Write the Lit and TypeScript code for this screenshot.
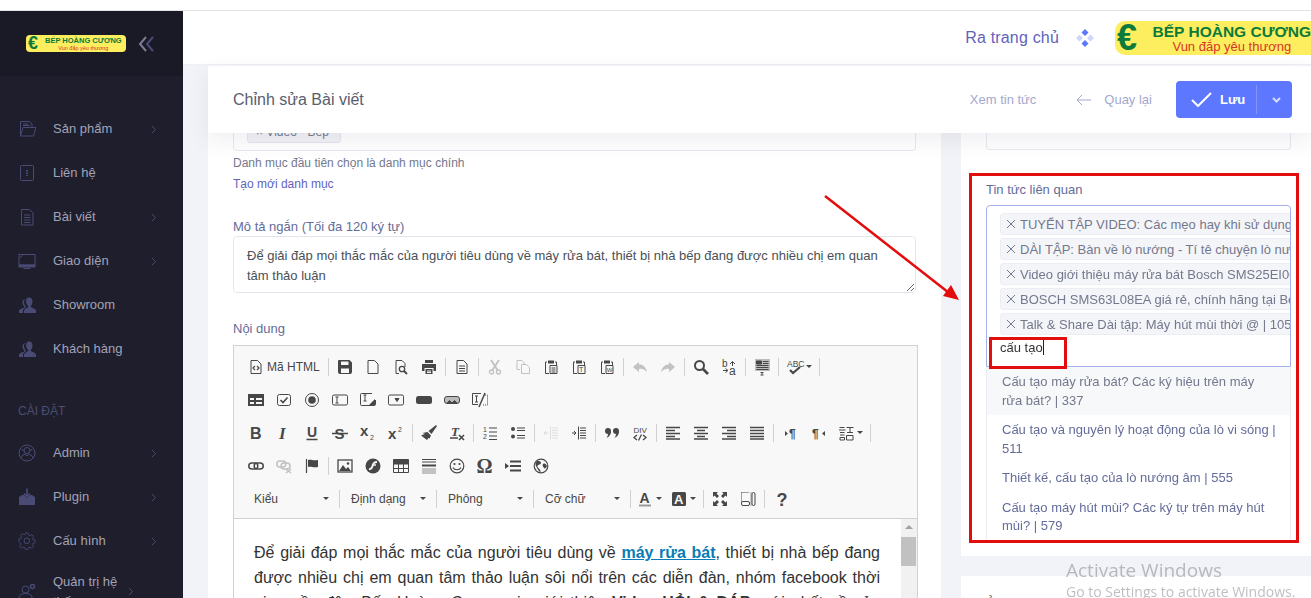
import { LitElement, html, css, svg } from 'lit';
import { customElement } from 'lit/decorators.js';

// toolbar icons, all on a 16x16 box
const t = (x: number, y: number, s: number, c: string, extra = '') =>
  svg`<text x=${x} y=${y} font-size=${s} font-family="Liberation Sans, sans-serif" font-weight=${extra || 'bold'} fill="currentColor" stroke="none">${c}</text>`;

const clip = svg`<path d="M4 3H2.500v11.500H6M12 3h1.500v3" fill="none" stroke="currentColor"/><path d="M5 1.500h6v3H5z" fill="currentColor"/>`;

const ICONS: Record<string, unknown> = {
  source: svg`<path d="M3 1.500h6.500l3.500 3.500v9.500H3z" fill="none" stroke="currentColor"/><path d="M7 7 5 9l2 2M9 7l2 2-2 2" fill="none" stroke="currentColor" stroke-width="1.200"/>`,
  save: svg`<path fill-rule="evenodd" d="M2 1h10.500L15 3.500V13a2 2 0 0 1-2 2H3a2 2 0 0 1-2-2V2a1 1 0 0 1 1-1zM4 2.500v3.500h7.500V2.500zM4 9.500V14h8V9.500z" fill="currentColor"/>`,
  newpage: svg`<path d="M3 1.500h6.500l3.500 3.500v9.500H3z" fill="none" stroke="currentColor"/>`,
  preview: svg`<path d="M6 14.500H3v-13h6l3 3V8" fill="none" stroke="currentColor"/><circle cx="9" cy="10" r="2.700" fill="none" stroke="currentColor" stroke-width="1.300"/><path d="m11 12 3 3" stroke="currentColor" stroke-width="1.800"/>`,
  print: svg`<path d="M4 1h8v3H4zM1 5h14v7h-2.500V9h-9v3H1zM4.500 10h7v5h-7z" fill="currentColor"/><path d="M6 12h4M6 13.500h4" stroke="#f8f8f8"/>`,
  templates: svg`<path d="M3 1.500h6.500l3.500 3.500v9.500H3z M5 7h6M5 9.500h6M5 12h6" fill="none" stroke="currentColor"/>`,
  cut: svg`<path d="m4 1 6.500 10M12 1 5.500 11" stroke="currentColor" stroke-width="1.800" fill="none"/><circle cx="4.500" cy="13" r="2" fill="none" stroke="currentColor" stroke-width="1.300"/><circle cx="11.500" cy="13" r="2" fill="none" stroke="currentColor" stroke-width="1.300"/>`,
  copy: svg`<path d="M5 10.500H2v-9h5l2 2V5M6.500 5.500h5l3 3v6h-8z" fill="none" stroke="currentColor"/>`,
  paste: svg`${clip}<path d="M7 6.500h7v8H7zM8.500 9h4M8.500 11h4M8.500 13h4" fill="none" stroke="currentColor"/>`,
  pastetext: svg`${clip}<path d="M7 6.500h7v8H7z" fill="none" stroke="currentColor"/>${t(8, 13, 7, 'T', 'normal')}`,
  pasteword: svg`${clip}<path d="M7 6.500h7v8H7z" fill="none" stroke="currentColor"/>${t(7.700, 13, 6, 'W', 'normal')}`,
  undo: svg`<path d="M7 3 1 8l6 5v-3c3-.5 5 0 8 3-1-5-4-7.500-8-7.500z" fill="currentColor"/>`,
  redo: svg`<path d="m9 3 6 5-6 5v-3c-3-.5-5 0-8 3 1-5 4-7.500 8-7.500z" fill="currentColor"/>`,
  find: svg`<circle cx="6.500" cy="6.500" r="4.500" fill="none" stroke="currentColor" stroke-width="2"/><path d="m10 10 5 5" stroke="currentColor" stroke-width="2.600"/>`,
  replace: svg`${t(1, 8, 10, 'b', 'normal')}${t(8, 16, 12, 'a', 'normal')}<path d="M9 5 11.500 2.500 14 5M11.500 3v4M2 11.500h4M4.500 9.500 7 11.500l-2.500 2" fill="none" stroke="currentColor"/>`,
  selectall: svg`<path d="M1 0h15v12H1z" fill="#bdbdbd"/><path d="M2.500 2h5v3h-5zM9 2.500h5.500M9 4.500h5.500M2.500 6.500h12M2.500 8.500h12M2.500 10.500h12" fill="currentColor" stroke="currentColor"/><path d="M6.500 13.500h3M8 13v3M6.500 16h3" stroke="currentColor" fill="none"/>`,
  spell: svg`${t(0, 7.500, 8.500, 'ABC', 'normal')}<path d="m3 11 3 3 7-6" fill="none" stroke="currentColor" stroke-width="2.200"/>`,
  form: svg`<path fill-rule="evenodd" d="M0 2h16v12H0zM2 6v2h4V6zm6 0v2h6V6zm-6 4v2h4v-2zm6 0v2h6v-2z" fill="currentColor"/>`,
  checkbox: svg`<rect x="1.500" y="2.500" width="13" height="11" rx="2" fill="none" stroke="currentColor"/><path d="m4.500 8 2.500 2.500 4.500-5" fill="none" stroke="currentColor" stroke-width="1.600"/>`,
  radio: svg`<circle cx="8" cy="8" r="6.500" fill="none" stroke="currentColor"/><circle cx="8" cy="8" r="3.800" fill="currentColor"/>`,
  textfield: svg`<rect x="0.500" y="3" width="15" height="10" rx="1.500" fill="none" stroke="currentColor"/><path d="M3.500 5h3M5 5v6M3.500 11h3" fill="none" stroke="currentColor"/>`,
  textarea: svg`<path d="M15.500 8v4.500a1 1 0 0 1-1 1h-13a1 1 0 0 1-1-1v-10a1 1 0 0 1 1-1H12" fill="none" stroke="currentColor"/><path d="M3.500 3h3M5 3v6M3.500 9h3" fill="none" stroke="currentColor"/><path d="m9 13 6-6v6z" fill="currentColor"/>`,
  select: svg`<rect x="0.500" y="3" width="15" height="10" rx="1.500" fill="none" stroke="currentColor"/><path d="m7 6.500 4 0-2 3z" fill="currentColor" stroke="currentColor"/>`,
  button: svg`<rect x="0" y="4" width="16" height="8" rx="2.500" fill="currentColor"/>`,
  imagebutton: svg`<rect x="0.500" y="4.500" width="15" height="7" rx="2.500" fill="#bbb" stroke="currentColor"/><path d="m3 11 2.500-2.500L8 11M8 11l2.500-2.500L13 11" fill="currentColor" stroke="currentColor"/>`,
  hidden: svg`<path d="M9 1.500H.5v11H6" fill="none" stroke="currentColor"/><path d="M3 4h3M4.500 4v6M3 10h3" fill="none" stroke="currentColor"/><path d="m7 15 6-14" stroke="currentColor" stroke-width="1.500"/><path d="M13 3h2.500v10H11" fill="none" stroke="currentColor" stroke-dasharray="1 1"/>`,
  bold: t(2, 14, 16, 'B'),
  italic: svg`<text x="3" y="14" font-size="17" font-family="Liberation Serif, serif" font-style="italic" font-weight="bold" fill="currentColor">I</text>`,
  underline: svg`${t(3, 12, 14, 'U')}<path d="M2.500 14.500h11" stroke="currentColor" stroke-width="1.500"/>`,
  strike: svg`${t(2.500, 14, 15, 'S')}<path d="M0 8.500h16" stroke="currentColor" stroke-width="1.500"/>`,
  sub: svg`${t(0, 11, 15, 'x')}${t(10, 15, 7, '2', 'normal')}`,
  sup: svg`${t(0, 14, 15, 'x')}${t(10, 7, 7, '2', 'normal')}`,
  brush: svg`<path d="M15 0 16 1 10.500 9 7.500 6zM6.500 7l3.500 3.500-1.500 3-1-.5-1.500 2L0 10.500 2.500 9.500 4 9 1.500 8z" fill="currentColor"/>`,
  removeformat: svg`<text x="2" y="11" font-size="13" font-family="Liberation Serif, serif" font-style="italic" font-weight="bold" fill="currentColor">T</text><path d="M1 13h8" stroke="currentColor" stroke-width="1.500"/><path d="m10 10 5 5M15 10l-5 5" stroke="currentColor" stroke-width="1.600"/>`,
  ol: svg`${t(1, 7, 7, '1', 'normal')}${t(1, 14, 7, '2', 'normal')}<path d="M7 3h8M7 7h8M7 11h8M7 14.500h8" stroke="currentColor"/>`,
  ul: svg`<circle cx="3" cy="4" r="2" fill="currentColor"/><circle cx="3" cy="11.500" r="2" fill="currentColor"/><path d="M7 3h8M7 5.500h8M7 10.500h8M7 13h8" stroke="currentColor"/>`,
  outdent: svg`<path d="M7.500 1.500v13M9 3h6M9 5.500h6M9 8h6M9 10.500h6M9 13h6" stroke="currentColor" opacity=".45"/><path d="M5 8H1M3 6 1 8l2 2" fill="none" stroke="currentColor" opacity=".45"/>`,
  indent: svg`<path d="M7.500 1.500v13M9 3h6M9 5.500h6M9 8h6M9 10.500h6M9 13h6M1 8h4M3 6l2 2-2 2" fill="none" stroke="currentColor"/>`,
  quote: svg`<circle cx="4" cy="6" r="3" fill="currentColor"/><path d="M7 6.500c0 3-2 5.500-4.500 6.500 1-1.500 1.500-3 1.500-4z" fill="currentColor"/><circle cx="12" cy="6" r="3" fill="currentColor"/><path d="M15 6.500c0 3-2 5.500-4.500 6.500 1-1.500 1.500-3 1.500-4z" fill="currentColor"/>`,
  div: svg`${t(1.500, 7.500, 8, 'DIV', 'normal')}<path d="M5 10 2 12.500 5 15M11 10l3 2.500-3 2.500M9.500 9.500l-3 6" fill="none" stroke="currentColor" stroke-width="1.300"/>`,
  left: svg`<path d="M1 2.500h14M1 5.500h9M1 8.500h14M1 11.500h9M1 14h14" stroke="currentColor" stroke-width="1.600"/>`,
  center: svg`<path d="M1 2.500h14M4 5.500h8M1 8.500h14M4 11.500h8M1 14h14" stroke="currentColor" stroke-width="1.600"/>`,
  right: svg`<path d="M1 2.500h14M6 5.500h9M1 8.500h14M6 11.500h9M1 14h14" stroke="currentColor" stroke-width="1.600"/>`,
  justify: svg`<path d="M1 2.500h14M1 5.500h14M1 8.500h14M1 11.500h14M1 14h14" stroke="currentColor" stroke-width="1.600"/>`,
  ltr: svg`<path d="m3 6 3 2.500L3 11z" fill="currentColor"/>${t(7, 13, 12, '¶')}`,
  rtl: svg`<path d="m15 6-3 2.500 3 2.500z" fill="currentColor"/>${t(2, 13, 12, '¶')}`,
  lang: svg`<path d="M1.500 2.500h5M1 5h6.500M2 7.500h4.500M2 10h4.500M2 12.500h4.500v2.500H2zM8.500 2.500h7M12 2.500v5M9 7.500h6M8.500 10.500h6.500v4.500H8.500z" fill="none" stroke="currentColor"/>`,
  link: svg`<rect x="0.800" y="5" width="9" height="6" rx="3" fill="none" stroke="currentColor" stroke-width="1.500"/><rect x="6.200" y="5" width="9" height="6" rx="3" fill="none" stroke="currentColor" stroke-width="1.500"/>`,
  unlink: svg`<rect x="0.800" y="3" width="9" height="6" rx="3" fill="none" stroke="currentColor" stroke-width="1.500"/><rect x="5" y="5" width="9" height="6" rx="3" fill="none" stroke="currentColor" stroke-width="1.500"/><path d="m10 11 5 4M15 11l-5 4" stroke="currentColor" stroke-width="1.500"/>`,
  flag: svg`<path d="M2.500 1v14" stroke="currentColor" stroke-width="1.200"/><path d="M4 2c3-1 5 1 10 0v7c-5 1-7-1-10 0z" fill="currentColor"/>`,
  image: svg`<rect x="1" y="2" width="14" height="12" fill="none" stroke="currentColor" stroke-width="1.300"/><path d="m2 13 4-6 3 4 2-2 3 4z" fill="currentColor"/><circle cx="11" cy="5.500" r="1.300" fill="currentColor"/>`,
  flash: svg`<circle cx="8" cy="8" r="7.500" fill="currentColor"/><path d="M12 4c-3 0-4 1.500-4.500 4S6 11 4 11.500" fill="none" stroke="#f8f8f8" stroke-width="1.800"/><path d="M7 7h4" stroke="#f8f8f8" stroke-width="1.400"/>`,
  table: svg`<path d="M.5 1.500h15v13H.5zM.5 6h15M.5 10.500h15M5.500 6v8.500M10.500 6v8.500" fill="none" stroke="currentColor"/><path d="M.5 1.500h15V6H.5z" fill="currentColor"/>`,
  hr: svg`<path d="M1 1.500h14M1 4h14" stroke="currentColor"/><path d="M1 7.500h14" stroke="currentColor" stroke-width="2"/><path d="M1 11h14M1 13h14M1 15h14" stroke="currentColor" opacity=".6"/>`,
  smile: svg`<circle cx="8" cy="8" r="6.800" fill="none" stroke="currentColor" stroke-width="1.200"/><circle cx="5.500" cy="6" r="1.100" fill="currentColor"/><circle cx="10.500" cy="6" r="1.100" fill="currentColor"/><path d="M4 9.500c1.500 3 6.500 3 8 0" fill="none" stroke="currentColor" stroke-width="1.200"/>`,
  omega: svg`<text x="-0.500" y="15" font-size="20" font-family="Liberation Serif, serif" font-weight="bold" fill="currentColor">Ω</text>`,
  pagebreak: svg`<path d="m0 5 4 3-4 3z" fill="currentColor"/><path d="M5 3.500h11M5 8h11M5 12.500h11" stroke="currentColor" stroke-width="1.800" stroke-dasharray="11 0"/>`,
  globe: svg`<circle cx="8" cy="8" r="6.800" fill="none" stroke="currentColor" stroke-width="1.200"/><path d="M4 3c2 0 4 0 4 2S5 6 4.500 8 7 10 7.500 13 5 12 4 10 2 6 2.500 5zM10 6c2-1 3 0 4 2-1 2-2 3-3 2s-2-3-1-4z" fill="currentColor"/>`,
  color: svg`${t(2.500, 11.500, 14, 'A')}<path d="M2 14.500h12" stroke="#9a9a9a" stroke-width="2"/>`,
  bgcolor: svg`<rect x="1" y="1" width="14" height="14" rx="1.500" fill="currentColor"/><text x="3" y="13" font-size="13" font-weight="bold" font-family="Liberation Sans, sans-serif" fill="#f8f8f8">A</text>`,
  maximize: svg`<path d="M1 1h5L4.500 2.500 7 5 5 7 2.500 4.500 1 6zM15 1v5l-1.500-1.500L11 7 9 5l2.500-2.500L10 1zM1 15v-5l1.500 1.500L5 9l2 2-2.500 2.500L6 15zM15 15h-5l1.500-1.500L9 11l2-2 2.500 2.500L15 10z" fill="currentColor"/>`,
  blocks: svg`<path d="M1.500 1.500h8M1.500 1.500v9M11 1.500v13" fill="none" stroke="currentColor" stroke-dasharray="1 1"/><rect x="1.500" y="10.500" width="8" height="4" rx="1.500" fill="none" stroke="currentColor"/><rect x="12" y="1.500" width="3" height="13" rx="1.500" fill="none" stroke="currentColor"/>`,
  about: t(3.500, 15, 18, '?'),
};

type Tool = string;
// '|' is a separator, '~name' a disabled icon, 'name>' an icon with a dropdown arrow
const ROWS: Tool[][] = [
  ['#source', '|', 'save', 'newpage', 'preview', 'print', '|', 'templates', '|', '~cut', '~copy', 'paste', 'pastetext', 'pasteword', '|', '~undo', '~redo', '|', 'find', 'replace', '|', 'selectall', '|', 'spell>', '|'],
  ['form', 'checkbox', 'radio', 'textfield', 'textarea', 'select', 'button', 'imagebutton', 'hidden'],
  ['bold', 'italic', 'underline', 'strike', 'sub', 'sup', '|', 'brush', 'removeformat', '|', 'ol', 'ul', '|', '~outdent', 'indent', '|', 'quote', 'div', '|', 'left', 'center', 'right', 'justify', '|', 'ltr', 'rtl', 'lang>', '|'],
  ['link', '~unlink', 'flag', '|', 'image', 'flash', 'table', 'hr', 'smile', 'omega', 'pagebreak', 'globe'],
];

const COMBOS = ['Kiểu', 'Định dạng', 'Phông', 'Cỡ chữ'];

const MENU_TOP = [
  ['Sản phẩm', 'box', true],
  ['Liên hệ', 'book', false],
  ['Bài viết', 'doc', true],
  ['Giao diện', 'screen', true],
  ['Showroom', 'users', false],
  ['Khách hàng', 'users', false],
] as const;

const MENU_SETTINGS = [
  ['Admin', 'admin', true],
  ['Plugin', 'plugin', true],
  ['Cấu hình', 'gear', true],
  ['Quản trị hệ thống', 'usergear', true],
] as const;

const NAV_ICONS: Record<string, unknown> = {
  box: svg`<path d="M2.500 16V1.500h9l2.500 2.500v3M2.500 16 5 7.500h13L15.500 16zM5 4h5M5 5.500h7" fill="none" stroke="currentColor"/>`,
  book: svg`<rect x="2.500" y="1.500" width="13" height="15" rx="1" fill="none" stroke="currentColor"/><path d="M9 6v6" stroke="currentColor" stroke-width="2" stroke-dasharray="1.500 1"/>`,
  doc: svg`<path d="M3.500 1.500h8l3.500 3.500v12h-11.500zM6 7h6.500M6 9.500h6.500M6 12h6.500M6 14.500h6.500" fill="none" stroke="currentColor"/>`,
  screen: svg`<rect x="1" y="2.500" width="16" height="10.500" fill="none" stroke="currentColor"/><path d="M1 13h16v2H1zM5.500 16.500h7" fill="currentColor" stroke="currentColor"/><path d="M2 5.500 4.500 3.500" stroke="currentColor"/>`,
  users: svg`<path d="M11 1.500c2.500 0 3.500 2 3.500 4s-1 4-2 5c1 1.500 4.500 1.500 5.500 4V17H6v-2.500c1-2.500 3.500-2.500 4.500-4-1-1-2.500-3-2.500-5 0-2.500 1-4 3-4z" fill="currentColor"/><path d="M7.500 3c-2 0-3 1.500-3 3.500 0 1.500 1 3.500 2 4.500-1 1.500-4.500 1.500-5.500 3.500V17h4v-3c1-1.500 2-2 3-3-1-1.500-2-3-2-5 0-1 .5-2.500 1.500-3z" fill="currentColor"/>`,
  admin: svg`<circle cx="9" cy="9" r="8" fill="none" stroke="currentColor"/><circle cx="9" cy="6.500" r="3" fill="none" stroke="currentColor"/><path d="M3 14c1-3 3-3.500 4-4l2 2 2-2c1 .5 3 1 4 4M3.500 5.500l3 1M14.500 5.500l-3 1" fill="none" stroke="currentColor"/>`,
  plugin: svg`<path d="M1 9l3-2h2l3 3 3-3h2l3 2v8H1z" fill="currentColor"/><path d="M9 0.500V8M6 5.500 9 8.500l3-3" fill="none" stroke="currentColor" stroke-width="1.600"/>`,
  gear: svg`<path d="M7.500 1h3l.5 2.500 1.500.7 2.200-1.300 2 2.200-1.300 2.100.6 1.500 2.500.5-.1 3-2.400.6-.6 1.500 1.300 2.100-2.200 2-2.100-1.300-1.500.6-.6 2.400h-3l-.5-2.400-1.500-.6-2.100 1.300-2.100-2.100 1.300-2.100-.6-1.500L0 11V8l2.500-.6.6-1.500-1.300-2.100 2.100-2 2.100 1.300 1.500-.6z" transform="scale(.88) translate(1 0)" fill="none" stroke="currentColor"/><circle cx="8.800" cy="8.800" r="2.800" fill="none" stroke="currentColor"/>`,
  usergear: svg`<circle cx="7.500" cy="6.500" r="3.500" fill="none" stroke="currentColor"/><path d="M1 17v-2c0-3 3-4.500 6.500-4.500s6 1 6.500 3.500v3z" fill="none" stroke="currentColor"/><circle cx="14.500" cy="3.500" r="2" fill="none" stroke="currentColor" stroke-width="1.500"/>`,
};

const CHIPS = [
  'TUYỂN TẬP VIDEO: Các mẹo hay khi sử dụng',
  'DÀI TẬP: Bàn về lò nướng - Tí tê chuyện lò nướng',
  'Video giới thiệu máy rửa bát Bosch SMS25EI00G',
  'BOSCH SMS63L08EA giá rẻ, chính hãng tại Bếp',
  'Talk & Share Dài tập: Máy hút mùi thời @ | 105',
];

const RESULTS = [
  'Cấu tạo máy rửa bát? Các ký hiệu trên máy rửa bát? | 337',
  'Cấu tạo và nguyên lý hoạt động của lò vi sóng | 511',
  'Thiết kế, cấu tạo của lò nướng âm | 555',
  'Cấu tạo máy hút mùi? Các ký tự trên máy hút mùi? | 579',
];

@customElement('app-root')
export class AppRoot extends LitElement {
  static styles = css`
    :host {
      display: block;
      position: relative;
      width: 1311px;
      height: 598px;
      overflow: hidden;
      background: #f2f3f8;
      font-family: "Liberation Sans", Arial, sans-serif;
      font-size: 13px;
      color: #646c9a;
    }
    .strip { height: 10px; background: #fff; border-bottom: 1px solid #e3e3e6; }
    .shell { display: flex; height: 587px; }

    .side { width: 183px; flex: none; background: #1e1e2d; overflow: hidden; }
    .brand { height: 65px; background: #1a1a27; display: flex; align-items: center; padding-left: 26px; gap: 12px; }
    .collapse { width: 18px; height: 18px; flex: none; }
    .nav { padding-top: 31px; }
    .nav-item { display: flex; align-items: center; min-height: 44px; padding: 0 26px 0 18px; box-sizing: border-box; color: #a2a3b7; line-height: 19.5px; }
    .nav-item.tall { padding-top: 9px; padding-bottom: 9px; }
    .nav-item.tall .nav-label { flex: none; width: 72px; margin-right: 3px; }
    .nav-icon { width: 18px; height: 18px; flex: none; color: #494b74; margin-right: 17px; }
    .nav-label { flex: 1; }
    .nav-arrow { width: 6px; height: 9px; flex: none; color: #494b74; }
    .nav-section { margin: 30px 0 10px 18px; line-height: 20px; font-size: 12px; color: #4c4e6f; }

    .logo { display: flex; align-items: center; background: #fdee5f; overflow: hidden; white-space: nowrap; box-sizing: border-box; }
    .logo-mark { color: #0b7a3b; font-weight: bold; }
    .logo-text { display: flex; flex-direction: column; align-items: center; }
    .logo-name { color: #0b7a3b; font-weight: bold; }
    .logo-tag { color: #d8352a; }
    .logo.small { width: 100px; height: 17px; border-radius: 4px; padding-left: 2px; }
    .small .logo-mark { font-size: 18px; line-height: 17px; width: 17px; }
    .small .logo-name { font-size: 7.500px; line-height: 9px; }
    .small .logo-tag { font-size: 5.500px; line-height: 6px; }
    .logo.large { width: 196px; height: 34px; border-radius: 10px 0 0 10px; padding-left: 2px; flex: none; }
    .large .logo-mark { font-size: 36px; line-height: 34px; width: 36px; }
    .large .logo-name { font-size: 15.500px; line-height: 18px; }
    .large .logo-tag { font-size: 13px; line-height: 12px; }

    .main { flex: 1; min-width: 0; display: flex; flex-direction: column; }
    .topbar { height: 54px; flex: none; box-sizing: border-box; background: #fff; border-bottom: 1px solid #eef0f4; display: flex; align-items: center; justify-content: flex-end; }
    .home { font-size: 16px; letter-spacing: .18px; color: #5f63bd; }
    .diamonds { width: 20px; height: 20px; margin: 0 20px 0 16px; flex: none; }
    .subheader { position: relative; z-index: 2; height: 68px; flex: none; box-sizing: border-box; margin-left: 25px; padding: 0 19px 0 25px; background: #fff; border-top: 1px solid #f1f2f6; box-shadow: 0 8px 22px rgba(82, 63, 105, .09); display: flex; align-items: center; }
    .title { flex: 1; font-size: 16px; color: #595d6e; }
    .sub-link { font-size: 13px; color: #a3a8d0; }
    .back { display: flex; align-items: center; gap: 13px; margin: 0 24px 0 40px; }
    .back svg { width: 15px; height: 12px; }
    .save { width: 116px; height: 37px; border-radius: 4px; background: #5d78ff; color: #fff; display: flex; align-items: center; font-weight: bold; font-size: 13px; }
    .save-main { display: flex; align-items: center; gap: 8px; box-sizing: border-box; padding-left: 15px; width: 81px; height: 29px; border-right: 1px solid #8195ff; }
    .save-main svg { width: 21px; height: 15px; }
    .save-arrow { width: 9px; height: 6px; margin-left: 15px; }

    .content { flex: 1; min-height: 0; margin-left: 25px; display: flex; gap: 20px; overflow: hidden; }
    .card { background: #fff; box-sizing: border-box; }
    .left { width: 733px; flex: none; padding: 0 25px; }
    .right-col { width: 350px; flex: none; display: flex; flex-direction: column; gap: 20px; }
    .right { height: 423px; flex: none; padding: 0 20px 0 25px; }
    .more { flex: 1; min-height: 0; overflow: hidden; padding: 19px 25px 0; color: #595d6e; }

    .field-end { height: 18px; box-sizing: border-box; border: 1px solid #e8e9f0; border-top: 0; border-radius: 0 0 4px 4px; overflow: hidden; padding-left: 13px; }
    .field-chip { width: 94px; height: 22px; margin-top: -12px; background: #f2f3f7; border: 1px solid #e6e7ee; border-radius: 3px; box-sizing: border-box; font-size: 12px; line-height: 20px; padding-left: 8px; color: #74788d; }
    .help { font-size: 12px; height: 18px; line-height: 20px; color: #74788d; margin-top: 2px; }
    .help.link { color: #5f63bd; margin-top: 3px; }
    label { display: block; height: 20px; line-height: 22px; color: #646c9a; }
    textarea { display: block; width: 100%; height: 57px; box-sizing: border-box; margin: 0 0 25px; padding: 9px 13px; border: 1px solid #e2e5ec; border-radius: 4px; font: 13px/19.500px "Liberation Sans", Arial, sans-serif; color: #495057; outline: none; }
    .desc-label { margin-top: 24px; }

    .editor { margin: 7px -2px 0 0; border: 1px solid #d1d1d1; }
    .toolbar { height: 173px; box-sizing: border-box; background: #f8f8f8; border-bottom: 1px solid #d1d1d1; padding: 4px 0 0 8px; color: #474747; }
    .tb-row { display: flex; align-items: center; height: 33px; }
    .tb-btn { width: 28px; height: 24px; flex: none; display: flex; align-items: center; justify-content: center; }
    .tb-btn svg { width: 16px; height: 16px; display: block; overflow: visible; }
    .tb-btn.off { opacity: .3; }
    .tb-btn.wide { width: auto; padding: 0 6px; gap: 3px; color: #474747; font-size: 12px; }
    .tb-btn.arrowed { width: 36px; gap: 3px; justify-content: flex-start; padding-left: 6px; box-sizing: border-box; }
    .tb-sep { width: 1px; height: 18px; flex: none; margin: 0 2px; background: #d0d0d0; }
    .caret { width: 0; height: 0; flex: none; border: 3px solid transparent; border-top-color: #474747; border-bottom: 0; }
    .combo { display: flex; align-items: center; justify-content: space-between; width: 85px; height: 24px; box-sizing: border-box; padding: 0 7px 0 3px; flex: none; font-size: 12px; color: #474747; }
    .combos { padding-left: 9px; }
    .combo + .tb-sep { margin: 0 8px 0 3px; }
    .after { display: flex; align-items: center; margin-left: -8px; }
    .after .tb-btn.arrowed:first-child { margin-right: -2px; }
    .doc-area { position: relative; height: 100px; background: #fff; padding: 21px 37px 0 20px; font-size: 16px; line-height: 25px; color: #333; text-align: justify; overflow: hidden; }
    .doc-area a { color: #0a7cb5; font-weight: bold; text-decoration: underline; }
    .scroll { position: absolute; right: 0; top: 0; bottom: 0; width: 16px; background: #f1f1f1; }
    .scroll i { position: absolute; top: 18px; left: 0; width: 15px; height: 29px; background: #c1c1c1; }
    .scroll b { position: absolute; top: 6px; left: 4px; border: 4px solid transparent; border-bottom: 4px solid #a3a3a3; border-top: 0; }

    .right-top { height: 17px; box-sizing: border-box; border: 1px solid #e8e9f0; border-top: 0; border-radius: 0 0 4px 4px; margin-bottom: 29px; }
    .right-label { margin-bottom: 6px; }
    .tags { height: 162px; box-sizing: border-box; border: 1px solid #a5b0ea; border-radius: 4px 4px 0 0; padding: 7px 0 0 13px; overflow: hidden; }
    .tag { display: flex; gap: 3px; align-items: center; height: 22px; width: 330px; box-sizing: border-box; margin-bottom: 3px; padding-left: 5px; background: #f4f5f8; border: 1px solid #eceef3; border-radius: 3px; white-space: nowrap; font-size: 13px; color: #74788d; }
    .tag svg { width: 10px; height: 10px; flex: none; margin-right: 1px; }
    .typed { margin-top: 3px; line-height: 20px; color: #333; }
    .typed span { border-right: 1px solid #222; }
    .results { height: 175px; overflow: hidden; border: 1px solid #ebedf2; border-width: 0 1px; }
    .result { padding: 6px 13px 5px 15px; font-size: 13px; line-height: 18.500px; color: #646c9a; }
    .result.on { background: #f7f8fa; color: #74788d; }

    .mark { position: absolute; box-sizing: border-box; border: 3px solid #e20d0d; pointer-events: none; z-index: 3; }
    .mark.outer { left: 969px; top: 173px; width: 330px; height: 370px; }
    .mark.inner { left: 989px; top: 337px; width: 78px; height: 32px; }
    .arrow { position: absolute; left: 820px; top: 190px; width: 145px; height: 118px; z-index: 3; }
    .watermark { position: absolute; left: 1066px; top: 558px; z-index: 4; color: rgba(110, 110, 120, .45); white-space: nowrap; font-family: "Open Sans", sans-serif; }
    .watermark div:first-child { font-size: 19px; line-height: 24px; }
    .watermark div:last-child { font-size: 14px; line-height: 18px; margin-top: 1px; }
  `;

  logo(size: string) {
    return html`<div class="logo ${size}">
      <span class="logo-mark">€</span>
      <div class="logo-text">
        <span class="logo-name">BẾP HOÀNG CƯƠNG</span>
        <span class="logo-tag">Vun đắp yêu thương</span>
      </div>
    </div>`;
  }

  navItem(item: readonly [string, string, boolean]) {
    const tall = item[0].length > 12;
    return html`<div class="nav-item ${tall ? 'tall' : ''}">
      <svg class="nav-icon" viewBox="0 0 18 18">${NAV_ICONS[item[1]]}</svg>
      <span class="nav-label">${item[0]}</span>
      ${item[2] ? html`<svg class="nav-arrow" viewBox="0 0 6 9"><path d="m1 1 3.500 3.500L1 8" fill="none" stroke="currentColor"/></svg>` : ''}
    </div>`;
  }

  tool(tool: Tool) {
    if (tool === '|') return html`<span class="tb-sep"></span>`;
    if (tool === '#source') {
      return html`<span class="tb-btn wide"><svg viewBox="0 0 16 16">${ICONS.source}</svg>Mã HTML</span>`;
    }
    const off = tool.startsWith('~');
    const arrowed = tool.endsWith('>');
    const name = tool.replace('~', '').replace('>', '');
    return html`<span class="tb-btn ${off ? 'off' : ''} ${arrowed ? 'arrowed' : ''}">
      <svg viewBox="0 0 16 16">${ICONS[name]}</svg>
      ${arrowed ? html`<i class="caret"></i>` : ''}
    </span>`;
  }

  render() {
    return html`
      <div class="strip"></div>
      <div class="shell">
        <aside class="side">
          <div class="brand">
            ${this.logo('small')}
            <svg class="collapse" viewBox="0 0 18 18">
              <path d="M8 2 2 9l6 7" fill="none" stroke="#7a7d93" stroke-width="2"/>
              <path d="M15 2 9 9l6 7" fill="none" stroke="#494b74" stroke-width="2"/>
            </svg>
          </div>
          <nav class="nav">
            ${MENU_TOP.map((m) => this.navItem(m))}
            <div class="nav-section">CÀI ĐẶT</div>
            ${MENU_SETTINGS.map((m) => this.navItem(m))}
          </nav>
        </aside>

        <div class="main">
          <div class="topbar">
            <span class="home">Ra trang chủ</span>
            <svg class="diamonds" viewBox="0 0 20 20">
              <path d="M10 1l3.500 3.500L10 8 6.500 4.500zM10 12l3.500 3.500L10 19l-3.500-3.500z" fill="#5d78ff"/>
              <path d="M4.500 6.500 8 10l-3.500 3.500L1 10zM15.500 6.500 19 10l-3.500 3.500L12 10z" fill="#cfd6fb"/>
            </svg>
            ${this.logo('large')}
          </div>

          <div class="subheader">
            <div class="title">Chỉnh sửa Bài viết</div>
            <span class="sub-link">Xem tin tức</span>
            <span class="sub-link back">
              <svg viewBox="0 0 15 12"><path d="M15 6H1M6 1 1 6l5 5" fill="none" stroke="currentColor"/></svg>
              Quay lại
            </span>
            <div class="save">
              <div class="save-main">
                <svg viewBox="0 0 21 15"><path d="m1 8 6 6L20 1" fill="none" stroke="#fff" stroke-width="2"/></svg>
                Lưu
              </div>
              <svg class="save-arrow" viewBox="0 0 9 6"><path d="m1 1 3.500 3.500L8 1" fill="none" stroke="#d5dcff" stroke-width="2"/></svg>
            </div>
          </div>

          <div class="content">
            <section class="card left">
              <div class="field-end"><div class="field-chip">× Video - Bếp</div></div>
              <div class="help">Danh mục đầu tiên chọn là danh mục chính</div>
              <div class="help link">Tạo mới danh mục</div>
              <label class="desc-label">Mô tả ngắn (Tối đa 120 ký tự)</label>
              <textarea .value=${'Để giải đáp mọi thắc mắc của người tiêu dùng về máy rửa bát, thiết bị nhà bếp đang được nhiều chị em quan tâm thảo luận'}></textarea>
              <label>Nội dung</label>
              <div class="editor">
                <div class="toolbar">
                  ${ROWS.map((row) => html`<div class="tb-row">${row.map((x) => this.tool(x))}</div>`)}
                  <div class="tb-row combos">
                    ${COMBOS.map((c) => html`<span class="combo">${c}<i class="caret"></i></span><span class="tb-sep"></span>`)}
                    <div class="after">
                      ${this.tool('color>')}
                      ${this.tool('bgcolor>')}
                      ${this.tool('|')}
                      ${this.tool('maximize')}
                      ${this.tool('blocks')}
                      ${this.tool('|')}
                      ${this.tool('about')}
                    </div>
                  </div>
                </div>
                <div class="doc-area">
                  Để giải đáp mọi thắc mắc của người tiêu dùng về <a>máy rửa bát</a>, thiết bị nhà bếp đang được nhiều chị em quan tâm thảo luận sôi nổi trên các diễn đàn, nhóm facebook thời gian gần đây. Bếp Hoàng Cương xin giới thiệu <b>Video HỎI &amp; ĐÁP</b> mới nhất về sản phẩm này.
                  <div class="scroll"><b></b><i></i></div>
                </div>
              </div>
            </section>

            <div class="right-col">
              <section class="card right">
                <div class="right-top"></div>
                <label class="right-label">Tin tức liên quan</label>
                <div class="tags">
                  ${CHIPS.map((c) => html`<div class="tag">
                    <svg viewBox="0 0 10 10"><path d="m1 1 8 8M9 1 1 9" stroke="currentColor" fill="none"/></svg>
                    ${c}
                  </div>`)}
                  <div class="typed"><span>cấu tạo</span></div>
                </div>
                <div class="results">
                  ${RESULTS.map((r, i) => html`<div class="result ${i === 0 ? 'on' : ''}">${r}</div>`)}
                </div>
              </section>
              <section class="card more">Ảnh</section>
            </div>
          </div>
        </div>
      </div>

      <div class="mark outer"></div>
      <div class="mark inner"></div>
      <svg class="arrow" viewBox="0 0 145 118">
        <path d="M5 6 133 106" stroke="#e20d0d" stroke-width="2.500" fill="none"/>
        <path d="M139 110 123 106 131 95z" fill="#e20d0d"/>
      </svg>
      <div class="watermark">
        <div>Activate Windows</div>
        <div>Go to Settings to activate Windows.</div>
      </div>
    `;
  }
}
